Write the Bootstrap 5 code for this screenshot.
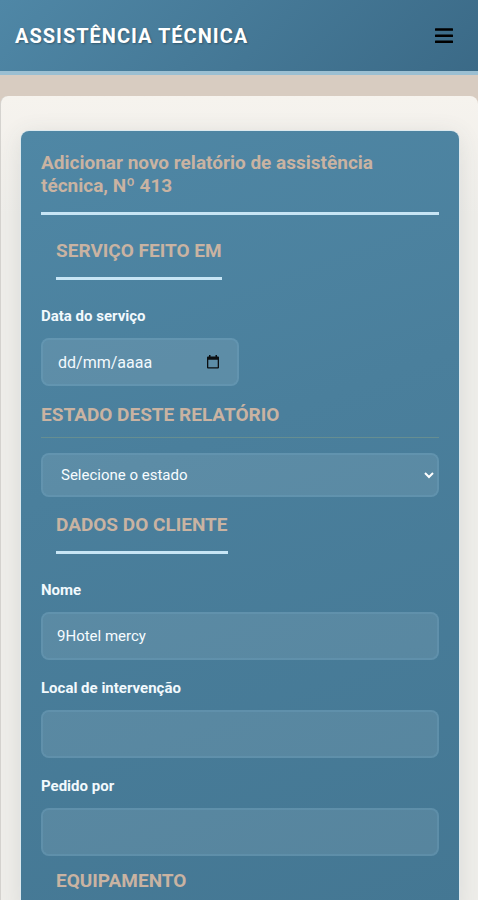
<!DOCTYPE html>
<html lang="pt">
<head>
<meta charset="utf-8">
<meta name="viewport" content="width=device-width, initial-scale=1">
<title>Assistência Técnica</title>
<link href="https://cdn.jsdelivr.net/npm/bootstrap@5.3.0/dist/css/bootstrap.min.css" rel="stylesheet">
<style>
body{font-family:Roboto,"Liberation Sans",sans-serif;font-size:15px;color:#f2f9fd;background:#d8ccc1}
.topbar{background:linear-gradient(135deg,#4f87a6,#467a98 45%,#3b6a87);border-bottom:4px solid #9bbfd2;height:75px;padding:0 15px}
.brand{font-size:20px;font-weight:700;letter-spacing:1px;color:#fff;text-shadow:1px 1px 2px rgba(0,0,0,.3)}
.menu-btn{width:38px;height:38px;color:#000}
.panel{margin-top:21px;padding:35px 19px 0 20px;border-left:1px solid #d5d3cf;border-radius:8px 8px 0 0;background:linear-gradient(#f6f3ee,#efeeea 120px)}
.report{padding:20px 20px 0;border-radius:8px 8px 0 0;background:linear-gradient(160deg,#4f87a5,#4a7f9c 40%,#447793);box-shadow:0 0 0 1px #dce9ee,0 4px 24px rgba(60,70,80,.12)}
.title{font-size:19px;line-height:23px;font-weight:700;color:#c9b3a2;padding-bottom:15px;border-bottom:3px solid #c7e5f5}
.section-head{font-size:19px;line-height:24px;font-weight:700;color:#c9b3a2}
.boxed{width:fit-content;margin:0 0 25px 15px;padding-bottom:14px;border-bottom:3px solid #c7e5f5}
.ruled{margin-bottom:15px;padding-bottom:10px;border-bottom:1px solid #668e91}
.field-label{font-weight:700;line-height:23px;margin-bottom:10px}
.field-group{margin-bottom:17px}
.field-group.group-end{margin-bottom:13px}
.field{height:48px;padding:0 14px;font-size:15px}
.field,.field:focus{background-color:rgba(255,255,255,.1);background-clip:padding-box;border:2px solid rgba(160,200,222,.28);border-radius:8px;color:#f7fcff}
.field::placeholder{color:#f2f9fd;opacity:1}
.date-box{width:198px}
.date-input{font-size:16px;padding-left:15px}
.date-btn{right:19px}
.state{height:44px;padding-left:18px;appearance:none;width:100%}
.state option{color:#222}
.chev{right:4px;pointer-events:none}
</style>
<script src="https://cdn.jsdelivr.net/npm/bootstrap@5.3.0/dist/js/bootstrap.bundle.min.js"></script>
</head>
<body>
<header class="topbar d-flex align-items-center justify-content-between">
  <a href="#" class="brand text-decoration-none text-uppercase">Assistência Técnica</a>
  <button type="button" class="menu-btn btn border-0 p-0 d-flex align-items-center justify-content-center" aria-label="Menu">
    <svg width="18" height="16" viewBox="0 0 18 16" fill="currentColor" aria-hidden="true"><rect y=".3" width="18" height="2.500" rx=".5"/><rect y="6.400" width="18" height="2.500" rx=".5"/><rect y="12.600" width="18" height="2.500" rx=".5"/></svg>
  </button>
</header>
<main class="panel">
  <form class="report">
    <h1 class="title mb-4">Adicionar novo relatório de assistência técnica, Nº 413</h1>
    <h2 class="section-head boxed">SERVIÇO FEITO EM</h2>
    <div class="field-group">
      <label class="field-label d-block" for="data">Data do serviço</label>
      <div class="date-box position-relative">
        <input id="data" type="text" class="form-control field date-input" placeholder="dd/mm/aaaa">
        <button type="button" class="date-btn btn border-0 p-0 position-absolute top-50 translate-middle-y d-flex" aria-label="Abrir calendário">
          <svg width="14" height="14" viewBox="0 0 14 14" aria-hidden="true"><path d="M3 0h1.500v1.500h5V0H11v1.500h1q1 0 1 1V12.500q0 1-1 1H2q-1 0-1-1V2.500q0-1 1-1h1zM2.300 4.800v7.400h9.400V4.800z" fill="#0b0f12" fill-rule="evenodd"/></svg>
        </button>
      </div>
    </div>
    <h2 class="section-head ruled"><label for="estado">ESTADO DESTE RELATÓRIO</label></h2>
    <div class="position-relative mb-3">
      <select id="estado" class="field state d-block"><option>Selecione o estado</option></select>
      <svg class="chev position-absolute top-50 translate-middle-y" width="12" height="12" viewBox="0 0 12 12" fill="none" stroke="#fff" stroke-width="2" aria-hidden="true"><path d="M2 4l4 4 4-4"/></svg>
    </div>
    <h2 class="section-head boxed">DADOS DO CLIENTE</h2>
    <div class="field-group">
      <label class="field-label d-block" for="nome">Nome</label>
      <input id="nome" type="text" class="form-control field" value="9Hotel mercy">
    </div>
    <div class="field-group">
      <label class="field-label d-block" for="local">Local de intervenção</label>
      <input id="local" type="text" class="form-control field">
    </div>
    <div class="field-group group-end">
      <label class="field-label d-block" for="pedido">Pedido por</label>
      <input id="pedido" type="text" class="form-control field">
    </div>
    <h2 class="section-head boxed mb-0">EQUIPAMENTO</h2>
  </form>
</main>
</body>
</html>
